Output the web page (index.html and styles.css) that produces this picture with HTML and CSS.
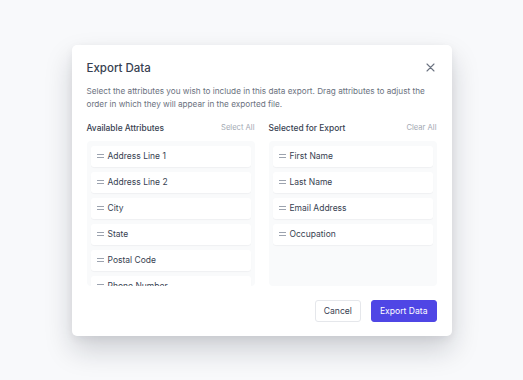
FILE: index.html
```html
<!DOCTYPE html>
<html lang="en">
<head>
    <meta charset="UTF-8">
    <meta name="viewport" content="width=device-width, initial-scale=1.0">
    <title>Export Data</title>
    <link rel="stylesheet" href="styles.css">
</head>
<body>

<div class="modal">
    <div class="modal-head">
        <h2>Export Data</h2>
        <button class="close" aria-label="Close">
            <svg width="9" height="9" viewBox="0 0 9 9"><path d="M1 1L8 8M8 1L1 8" stroke="#6b7280" stroke-width="1.1" stroke-linecap="round"/></svg>
        </button>
    </div>
    <p class="desc">Select the attributes you wish to include in this data export. Drag attributes to adjust the order in which they will appear in the exported file.</p>

    <div class="columns">
        <div class="column">
            <div class="column-head">
                <span class="column-title">Available Attributes</span>
                <a class="column-action">Select All</a>
            </div>
            <ul class="list">
                <li><span class="grip"></span>Address Line 1</li>
                <li><span class="grip"></span>Address Line 2</li>
                <li><span class="grip"></span>City</li>
                <li><span class="grip"></span>State</li>
                <li><span class="grip"></span>Postal Code</li>
                <li><span class="grip"></span>Phone Number</li>
            </ul>
        </div>
        <div class="column">
            <div class="column-head">
                <span class="column-title">Selected for Export</span>
                <a class="column-action">Clear All</a>
            </div>
            <ul class="list">
                <li><span class="grip"></span>First Name</li>
                <li><span class="grip"></span>Last Name</li>
                <li><span class="grip"></span>Email Address</li>
                <li><span class="grip"></span>Occupation</li>
            </ul>
        </div>
    </div>

    <div class="modal-foot">
        <button class="btn btn-light">Cancel</button>
        <button class="btn btn-primary">Export Data</button>
    </div>
</div>

</body>
</html>
```
FILE: styles.css
```css
body {
    font-family: Inter, "Noto Sans", sans-serif;
    display: flex;
    align-items: center;
    justify-content: center;
    min-height: 100vh;
    margin: 0;
    background: #f8f9fb;
    color: #374151;
}
.modal {
    width: 380px;
    box-sizing: border-box;
    background: #ffffff;
    border-radius: 5px;
    padding: 14px 15px 14px;
    box-shadow: 0 14px 28px rgba(17, 24, 39, 0.18), 0 3px 8px rgba(17, 24, 39, 0.06);
}
.modal-head {
    display: flex;
    align-items: center;
    justify-content: space-between;
    height: 18px;
}
h2 {
    margin: 0;
    font-size: 11.5px;
    font-weight: 500;
    color: #374151;
}
.close {
    border: none;
    background: none;
    padding: 0;
    margin-right: 2px;
    display: flex;
    cursor: pointer;
}
.desc {
    margin: 8px 0 0;
    font-size: 8.2px;
    line-height: 13px;
    color: #6b7280;
}
.columns {
    display: grid;
    grid-template-columns: 1fr 1fr;
    gap: 14px;
    margin-top: 11px;
}
.column-head {
    display: flex;
    align-items: center;
    justify-content: space-between;
    height: 12px;
}
.column-title {
    font-size: 8.4px;
    font-weight: 500;
    color: #374151;
}
.column-action {
    font-size: 7.6px;
    color: #a3a9b3;
    cursor: pointer;
}
.list {
    list-style: none;
    margin: 7px 0 0;
    padding: 5px 4px 4px;
    height: 136px;
    overflow: hidden;
    background: #f9fafb;
    border-radius: 4px;
    display: flex;
    flex-direction: column;
    gap: 5px;
}
.list li {
    flex: none;
    display: flex;
    align-items: center;
    height: 21px;
    padding: 0 6px;
    background: #ffffff;
    border-radius: 3px;
    box-shadow: 0 1px 1px rgba(17, 24, 39, 0.04);
    font-size: 8.5px;
    color: #374151;
}
.grip {
    width: 7px;
    height: 2px;
    border-top: 1px solid #9ca3af;
    border-bottom: 1px solid #9ca3af;
    margin-right: 4px;
}
.modal-foot {
    display: flex;
    justify-content: flex-end;
    gap: 10px;
    margin-top: 14px;
}
.btn {
    font-family: inherit;
    font-size: 8.6px;
    height: 22px;
    padding: 0 8px;
    border-radius: 3px;
    cursor: pointer;
}
.btn-light {
    background: #ffffff;
    color: #374151;
    border: 1px solid #e5e7eb;
}
.btn-primary {
    background: #4f46e5;
    color: #ffffff;
    border: 1px solid #4f46e5;
}
```
